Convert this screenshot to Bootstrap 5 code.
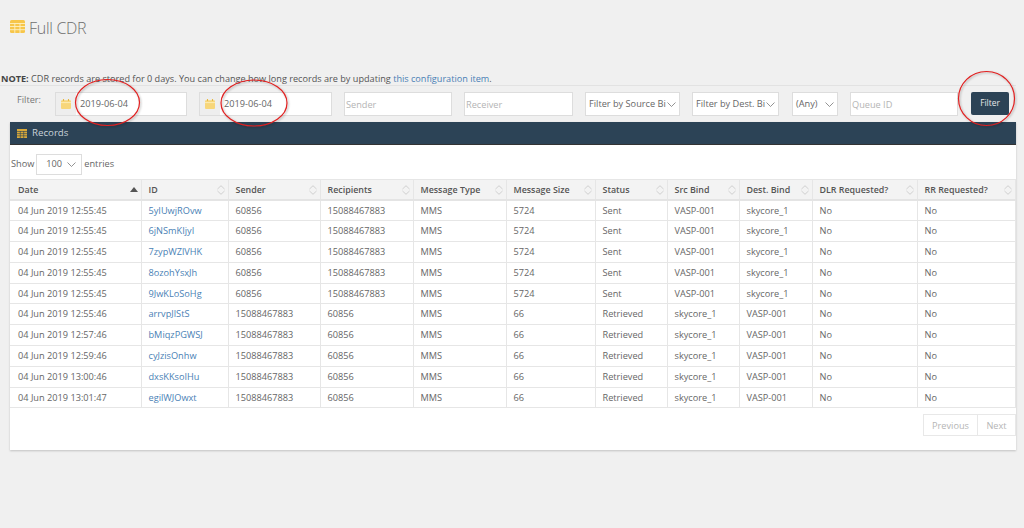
<!DOCTYPE html>
<html lang="en">
<head>
<meta charset="utf-8">
<title>Full CDR</title>
<link href="https://cdn.jsdelivr.net/npm/bootstrap@5.3.0/dist/css/bootstrap.min.css" rel="stylesheet">
<style>
html,body{height:528px;overflow:hidden}
body{background:#f0f0f0;font-family:"Open Sans",sans-serif;font-size:9.2px;color:#666;position:relative}
a{color:#4a7fb5;text-decoration:none}
.page-title{font-size:16px;letter-spacing:-.3px;font-weight:300;color:#6e6e6e;padding:17px 0 0 10px;height:70px;margin:0;line-height:22px;gap:4px;align-items:flex-start}
.page-title svg{margin-top:3px}
.note-line{padding-left:1px;height:15px;line-height:17px;font-size:9.14px;color:#555;white-space:nowrap}
.note-line b{color:#444}
.filter-bar{border-top:1px solid #e2e2e2;height:37px;padding:6px 14px 0 17px;width:1016px}
.filter-label{width:38px;flex:none;font-size:9.2px;color:#777;line-height:16px}
.fld{height:24px;border:1px solid #ddd;background:#fff;font-size:9.2px;color:#666;padding:0 1px;border-radius:0;font-family:inherit;flex:none;margin-right:12px;outline:0}
.fld::placeholder{color:#b4b4b4;opacity:1}
.date-group{width:132px;padding:0;display:flex;align-items:center}
.date-group+.date-group{width:133px}
.date-add{width:20px;height:22px;background:#eee;display:flex;align-items:center;justify-content:center;flex:none}
.date-val{padding-left:4px}
.sel{padding:0 3px;display:flex;align-items:center;justify-content:space-between;white-space:nowrap;overflow:hidden}
.w-sender{width:108px}
.w-receiver{width:109px}
.w-source{width:95px}
.w-dest{width:87px;margin-right:13px}
.w-any{width:46px}
.w-queue{width:108px;margin-right:13px}
.go-btn{width:38px;height:23px;background:#2c4356;color:#e8e8e8;border:0;border-radius:2px;font-size:8.4px;padding:0;flex:none;font-family:inherit}
.rec-panel{margin:0 8px 0 10px;width:1006px;height:328px;background:#fff;box-shadow:0 1px 2px rgba(0,0,0,.2)}
.rec-head{height:23px;background:#2c4356;color:#c9d2d9;font-size:9.7px;padding-left:7px;gap:5px;border-bottom:1px solid #333}
.show-line{height:34px;padding:4px 0 0 1px;gap:2px;color:#666}
.show-box{width:46px;height:21px;border:1px solid #ddd;display:flex;align-items:center;justify-content:space-between;padding:0 5px 0 9px}
.cdr-table{table-layout:fixed;width:1005px;margin:0;font-size:9.2px;--bs-table-color:#666;color:#666}
.cdr-table th,.cdr-table td{padding:0 0 0 7px;height:20.8px;line-height:14px;border:1px solid #e6e6e6;border-width:0 1px 1px 0;white-space:nowrap;overflow:hidden;vertical-align:middle}
.cdr-table th:first-child,.cdr-table td:first-child{padding-left:8px}
.cdr-table thead th{background:#f3f3f3;color:#555;font-weight:600;font-size:8.9px;height:20.5px;border-top:1px solid #e6e6e6;border-bottom:2px solid #e4e4e4}
.head-cell{display:flex;align-items:center;justify-content:space-between;padding-right:3px}
.c1{width:131px}.c2{width:87px}.c3{width:92px}.c4{width:93px}.c5{width:93px}.c6{width:89px}.c7{width:72px}.c8{width:72px}.c9{width:73px}.c10{width:105px}.c11{width:98px}
.pager{height:42px;padding-top:6px;gap:0}
.pager span{height:22px;border:1px solid #e8e8e8;color:#b5b5b5;display:flex;align-items:center;justify-content:center}
.pg-prev{width:55px}
.pg-next{width:38px;border-left:0!important}
.marks{position:absolute;left:0;top:0;pointer-events:none}
</style>
</head>
<body>
<h1 class="page-title d-flex">
<svg width="15" height="13" viewBox="0 0 15 13"><rect width="15" height="13" rx="1.5" fill="#f7c64a"/><path d="M0 3.5H15M0 6.5H15M0 9.7H15M4.8 3V13M10 3V13" stroke="#fdf0c4" stroke-width=".9"/></svg>
<span>Full CDR</span></h1>
<div class="note-line"><b>NOTE:</b> CDR records are stored for 0 days. You can change how long records are by updating <a href="#">this configuration item</a>.</div>
<form class="filter-bar d-flex align-items-start">
<label class="filter-label">Filter:</label>
<div class="fld date-group"><span class="date-add"><svg width="10" height="10" viewBox="0 0 10 10"><rect y="1.2" width="10" height="8.8" rx="1" fill="#f7d67a"/><path d="M0 3.6H10" stroke="#fdf0c4" stroke-width=".8"/><path d="M2.5 0V2M7.5 0V2" stroke="#e8b840" stroke-width="1.1"/></svg></span><span class="date-val">2019-06-04</span></div>
<div class="fld date-group"><span class="date-add"><svg width="10" height="10" viewBox="0 0 10 10"><rect y="1.2" width="10" height="8.8" rx="1" fill="#f7d67a"/><path d="M0 3.6H10" stroke="#fdf0c4" stroke-width=".8"/><path d="M2.5 0V2M7.5 0V2" stroke="#e8b840" stroke-width="1.1"/></svg></span><span class="date-val">2019-06-04</span></div>
<input class="fld w-sender" placeholder="Sender">
<input class="fld w-receiver" placeholder="Receiver">
<div class="fld sel w-source"><span>Filter by Source Bi</span><svg width="9" height="5" viewBox="0 0 9 5" fill="none" stroke="#777" stroke-width=".8"><path d="M.5.5 4.5 4.5 8.5.5"/></svg></div>
<div class="fld sel w-dest"><span>Filter by Dest. Bi</span><svg width="9" height="5" viewBox="0 0 9 5" fill="none" stroke="#777" stroke-width=".8"><path d="M.5.5 4.5 4.5 8.5.5"/></svg></div>
<div class="fld sel w-any"><span>(Any)</span><svg width="9" height="5" viewBox="0 0 9 5" fill="none" stroke="#777" stroke-width=".8"><path d="M.5.5 4.5 4.5 8.5.5"/></svg></div>
<input class="fld w-queue" placeholder="Queue ID">
<button type="button" class="go-btn">Filter</button>
</form>
<section class="rec-panel">
<div class="rec-head d-flex align-items-center">
<svg width="10" height="9" viewBox="0 0 10 9"><rect width="10" height="9" fill="#d9a93a"/><path d="M0 2.5H10M0 4.6H10M0 6.8H10M3.3 2V9M6.7 2V9" stroke="#2c4356" stroke-width=".6"/></svg>
<span>Records</span></div>
<div class="show-line d-flex align-items-center"><span>Show</span><span class="show-box"><span>100</span><svg width="9" height="5" viewBox="0 0 9 5" fill="none" stroke="#777" stroke-width=".8"><path d="M.5.5 4.5 4.5 8.5.5"/></svg></span><span>entries</span></div>
<table class="table cdr-table">
<colgroup><col class="c1"><col class="c2"><col class="c3"><col class="c4"><col class="c5"><col class="c6"><col class="c7"><col class="c8"><col class="c9"><col class="c10"><col class="c11"></colgroup>
<thead><tr>
<th><div class="head-cell">Date<svg width="8" height="5" viewBox="0 0 8 5"><path d="M4 0 8 5H0Z" fill="#555"/></svg></div></th>
<th><div class="head-cell">ID<svg width="8" height="10" viewBox="0 0 8 10" fill="none" stroke="#ccc" stroke-width=".9"><path d="M.5 4 4 .7 7.5 4M.5 6 4 9.3 7.5 6"/></svg></div></th>
<th><div class="head-cell">Sender<svg width="8" height="10" viewBox="0 0 8 10" fill="none" stroke="#ccc" stroke-width=".9"><path d="M.5 4 4 .7 7.5 4M.5 6 4 9.3 7.5 6"/></svg></div></th>
<th><div class="head-cell">Recipients<svg width="8" height="10" viewBox="0 0 8 10" fill="none" stroke="#ccc" stroke-width=".9"><path d="M.5 4 4 .7 7.5 4M.5 6 4 9.3 7.5 6"/></svg></div></th>
<th><div class="head-cell">Message Type<svg width="8" height="10" viewBox="0 0 8 10" fill="none" stroke="#ccc" stroke-width=".9"><path d="M.5 4 4 .7 7.5 4M.5 6 4 9.3 7.5 6"/></svg></div></th>
<th><div class="head-cell">Message Size<svg width="8" height="10" viewBox="0 0 8 10" fill="none" stroke="#ccc" stroke-width=".9"><path d="M.5 4 4 .7 7.5 4M.5 6 4 9.3 7.5 6"/></svg></div></th>
<th><div class="head-cell">Status<svg width="8" height="10" viewBox="0 0 8 10" fill="none" stroke="#ccc" stroke-width=".9"><path d="M.5 4 4 .7 7.5 4M.5 6 4 9.3 7.5 6"/></svg></div></th>
<th><div class="head-cell">Src Bind<svg width="8" height="10" viewBox="0 0 8 10" fill="none" stroke="#ccc" stroke-width=".9"><path d="M.5 4 4 .7 7.5 4M.5 6 4 9.3 7.5 6"/></svg></div></th>
<th><div class="head-cell">Dest. Bind<svg width="8" height="10" viewBox="0 0 8 10" fill="none" stroke="#ccc" stroke-width=".9"><path d="M.5 4 4 .7 7.5 4M.5 6 4 9.3 7.5 6"/></svg></div></th>
<th><div class="head-cell">DLR Requested?<svg width="8" height="10" viewBox="0 0 8 10" fill="none" stroke="#ccc" stroke-width=".9"><path d="M.5 4 4 .7 7.5 4M.5 6 4 9.3 7.5 6"/></svg></div></th>
<th><div class="head-cell">RR Requested?<svg width="8" height="10" viewBox="0 0 8 10" fill="none" stroke="#ccc" stroke-width=".9"><path d="M.5 4 4 .7 7.5 4M.5 6 4 9.3 7.5 6"/></svg></div></th>
</tr></thead>
<tbody>
<tr><td>04 Jun 2019 12:55:45</td><td><a href="#">5yIUwjROvw</a></td><td>60856</td><td>15088467883</td><td>MMS</td><td>5724</td><td>Sent</td><td>VASP-001</td><td>skycore_1</td><td>No</td><td>No</td></tr>
<tr><td>04 Jun 2019 12:55:45</td><td><a href="#">6jNSmKIjyI</a></td><td>60856</td><td>15088467883</td><td>MMS</td><td>5724</td><td>Sent</td><td>VASP-001</td><td>skycore_1</td><td>No</td><td>No</td></tr>
<tr><td>04 Jun 2019 12:55:45</td><td><a href="#">7zypWZlVHK</a></td><td>60856</td><td>15088467883</td><td>MMS</td><td>5724</td><td>Sent</td><td>VASP-001</td><td>skycore_1</td><td>No</td><td>No</td></tr>
<tr><td>04 Jun 2019 12:55:45</td><td><a href="#">8ozohYsxJh</a></td><td>60856</td><td>15088467883</td><td>MMS</td><td>5724</td><td>Sent</td><td>VASP-001</td><td>skycore_1</td><td>No</td><td>No</td></tr>
<tr><td>04 Jun 2019 12:55:45</td><td><a href="#">9JwKLoSoHg</a></td><td>60856</td><td>15088467883</td><td>MMS</td><td>5724</td><td>Sent</td><td>VASP-001</td><td>skycore_1</td><td>No</td><td>No</td></tr>
<tr><td>04 Jun 2019 12:55:46</td><td><a href="#">arrvpJlStS</a></td><td>15088467883</td><td>60856</td><td>MMS</td><td>66</td><td>Retrieved</td><td>skycore_1</td><td>VASP-001</td><td>No</td><td>No</td></tr>
<tr><td>04 Jun 2019 12:57:46</td><td><a href="#">bMiqzPGWSJ</a></td><td>15088467883</td><td>60856</td><td>MMS</td><td>66</td><td>Retrieved</td><td>skycore_1</td><td>VASP-001</td><td>No</td><td>No</td></tr>
<tr><td>04 Jun 2019 12:59:46</td><td><a href="#">cyJzisOnhw</a></td><td>15088467883</td><td>60856</td><td>MMS</td><td>66</td><td>Retrieved</td><td>skycore_1</td><td>VASP-001</td><td>No</td><td>No</td></tr>
<tr><td>04 Jun 2019 13:00:46</td><td><a href="#">dxsKKsoIHu</a></td><td>15088467883</td><td>60856</td><td>MMS</td><td>66</td><td>Retrieved</td><td>skycore_1</td><td>VASP-001</td><td>No</td><td>No</td></tr>
<tr><td>04 Jun 2019 13:01:47</td><td><a href="#">egilWJOwxt</a></td><td>15088467883</td><td>60856</td><td>MMS</td><td>66</td><td>Retrieved</td><td>skycore_1</td><td>VASP-001</td><td>No</td><td>No</td></tr>
</tbody>
</table>
<div class="pager d-flex justify-content-end"><span class="pg-prev">Previous</span><span class="pg-next">Next</span></div>
</section>
<svg class="marks" width="1024" height="528" viewBox="0 0 1024 528" fill="none">
<defs><filter id="sh"><feDropShadow dx="1" dy="1" stdDeviation="1" flood-color="#000" flood-opacity=".3"/></filter></defs>
<g stroke="#e02020" stroke-width="1.2" filter="url(#sh)">
<ellipse cx="107.5" cy="102.5" rx="32" ry="23"/>
<ellipse cx="254" cy="103" rx="33" ry="23"/>
<ellipse cx="986.5" cy="98.5" rx="28" ry="27"/>
</g></svg>
</body>
</html>
